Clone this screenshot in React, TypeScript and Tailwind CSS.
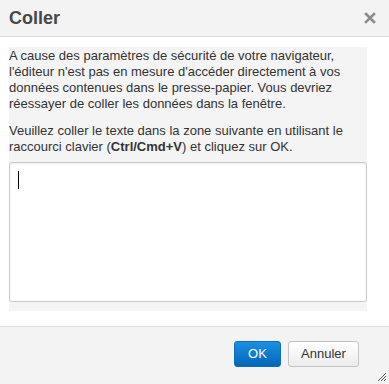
import React from 'react';

const PasteDialog: React.FC = () => {
  return (
    <div className="w-[389px] h-[384px] flex flex-col bg-white font-['Liberation_Sans',Arial,sans-serif] text-[#333] relative overflow-hidden">
      <div className="h-[37px] shrink-0 bg-[#f3f3f3] border-b border-[#dcdcdc] flex items-center justify-between pl-[9px] pr-[13px]">
        <h2 className="text-[18px] font-bold text-[#474747] leading-none">Coller</h2>
        <button className="text-[#8c8c8c] hover:text-[#555] leading-none">
          <svg width="12" height="12" viewBox="0 0 12 12">
            <path d="M2 2 L10 10 M10 2 L2 10" stroke="currentColor" strokeWidth="2.6" strokeLinecap="square" />
          </svg>
        </button>
      </div>

      <div className="flex-1 px-[9px] pt-[10px] pb-[15px]">
        <div className="w-[358px] bg-[#f4f4f4] pt-[1px] pb-[9px] text-[13px] leading-[16px]">
          <p>
            A cause des paramètres de sécurité de votre navigateur, l'éditeur n'est pas en mesure d'accéder directement à vos données contenues dans le presse-papier. Vous devriez réessayer de coller les données dans la fenêtre.
          </p>
          <p className="mt-[11px]">
            Veuillez coller le texte dans la zone suivante en utilisant le raccourci clavier (<b>Ctrl/Cmd+V</b>) et cliquez sur OK.
          </p>
          <div className="mt-[7px] h-[140px] bg-white border border-[#c9c9c9] rounded-[3px] shadow-[inset_0_1px_2px_rgba(0,0,0,0.08)] px-[8px] pt-[8px]">
            <div className="w-[1px] h-[18px] bg-black" />
          </div>
        </div>
      </div>

      <div className="h-[58px] shrink-0 bg-[#f3f3f3] border-t border-[#dcdcdc] flex items-start justify-end gap-[7px] pt-[14px] pr-[30px]">
        <button className="w-[47px] h-[26px] rounded-[3px] border border-[#0b6fc0] bg-gradient-to-b from-[#1b90e2] to-[#0467b9] text-white text-[13px]">
          OK
        </button>
        <button className="w-[71px] h-[26px] rounded-[3px] border border-[#c4c4c4] bg-gradient-to-b from-white to-[#ececec] text-[#333] text-[13px]">
          Annuler
        </button>
      </div>

      <svg className="absolute right-[2px] bottom-[2px]" width="12" height="12" viewBox="0 0 12 12">
        <path d="M11 3 L3 11 M11 6 L6 11 M11 9 L9 11" stroke="#555" strokeWidth="1" />
      </svg>
    </div>
  );
};

export default function App() {
  return <PasteDialog />;
}
